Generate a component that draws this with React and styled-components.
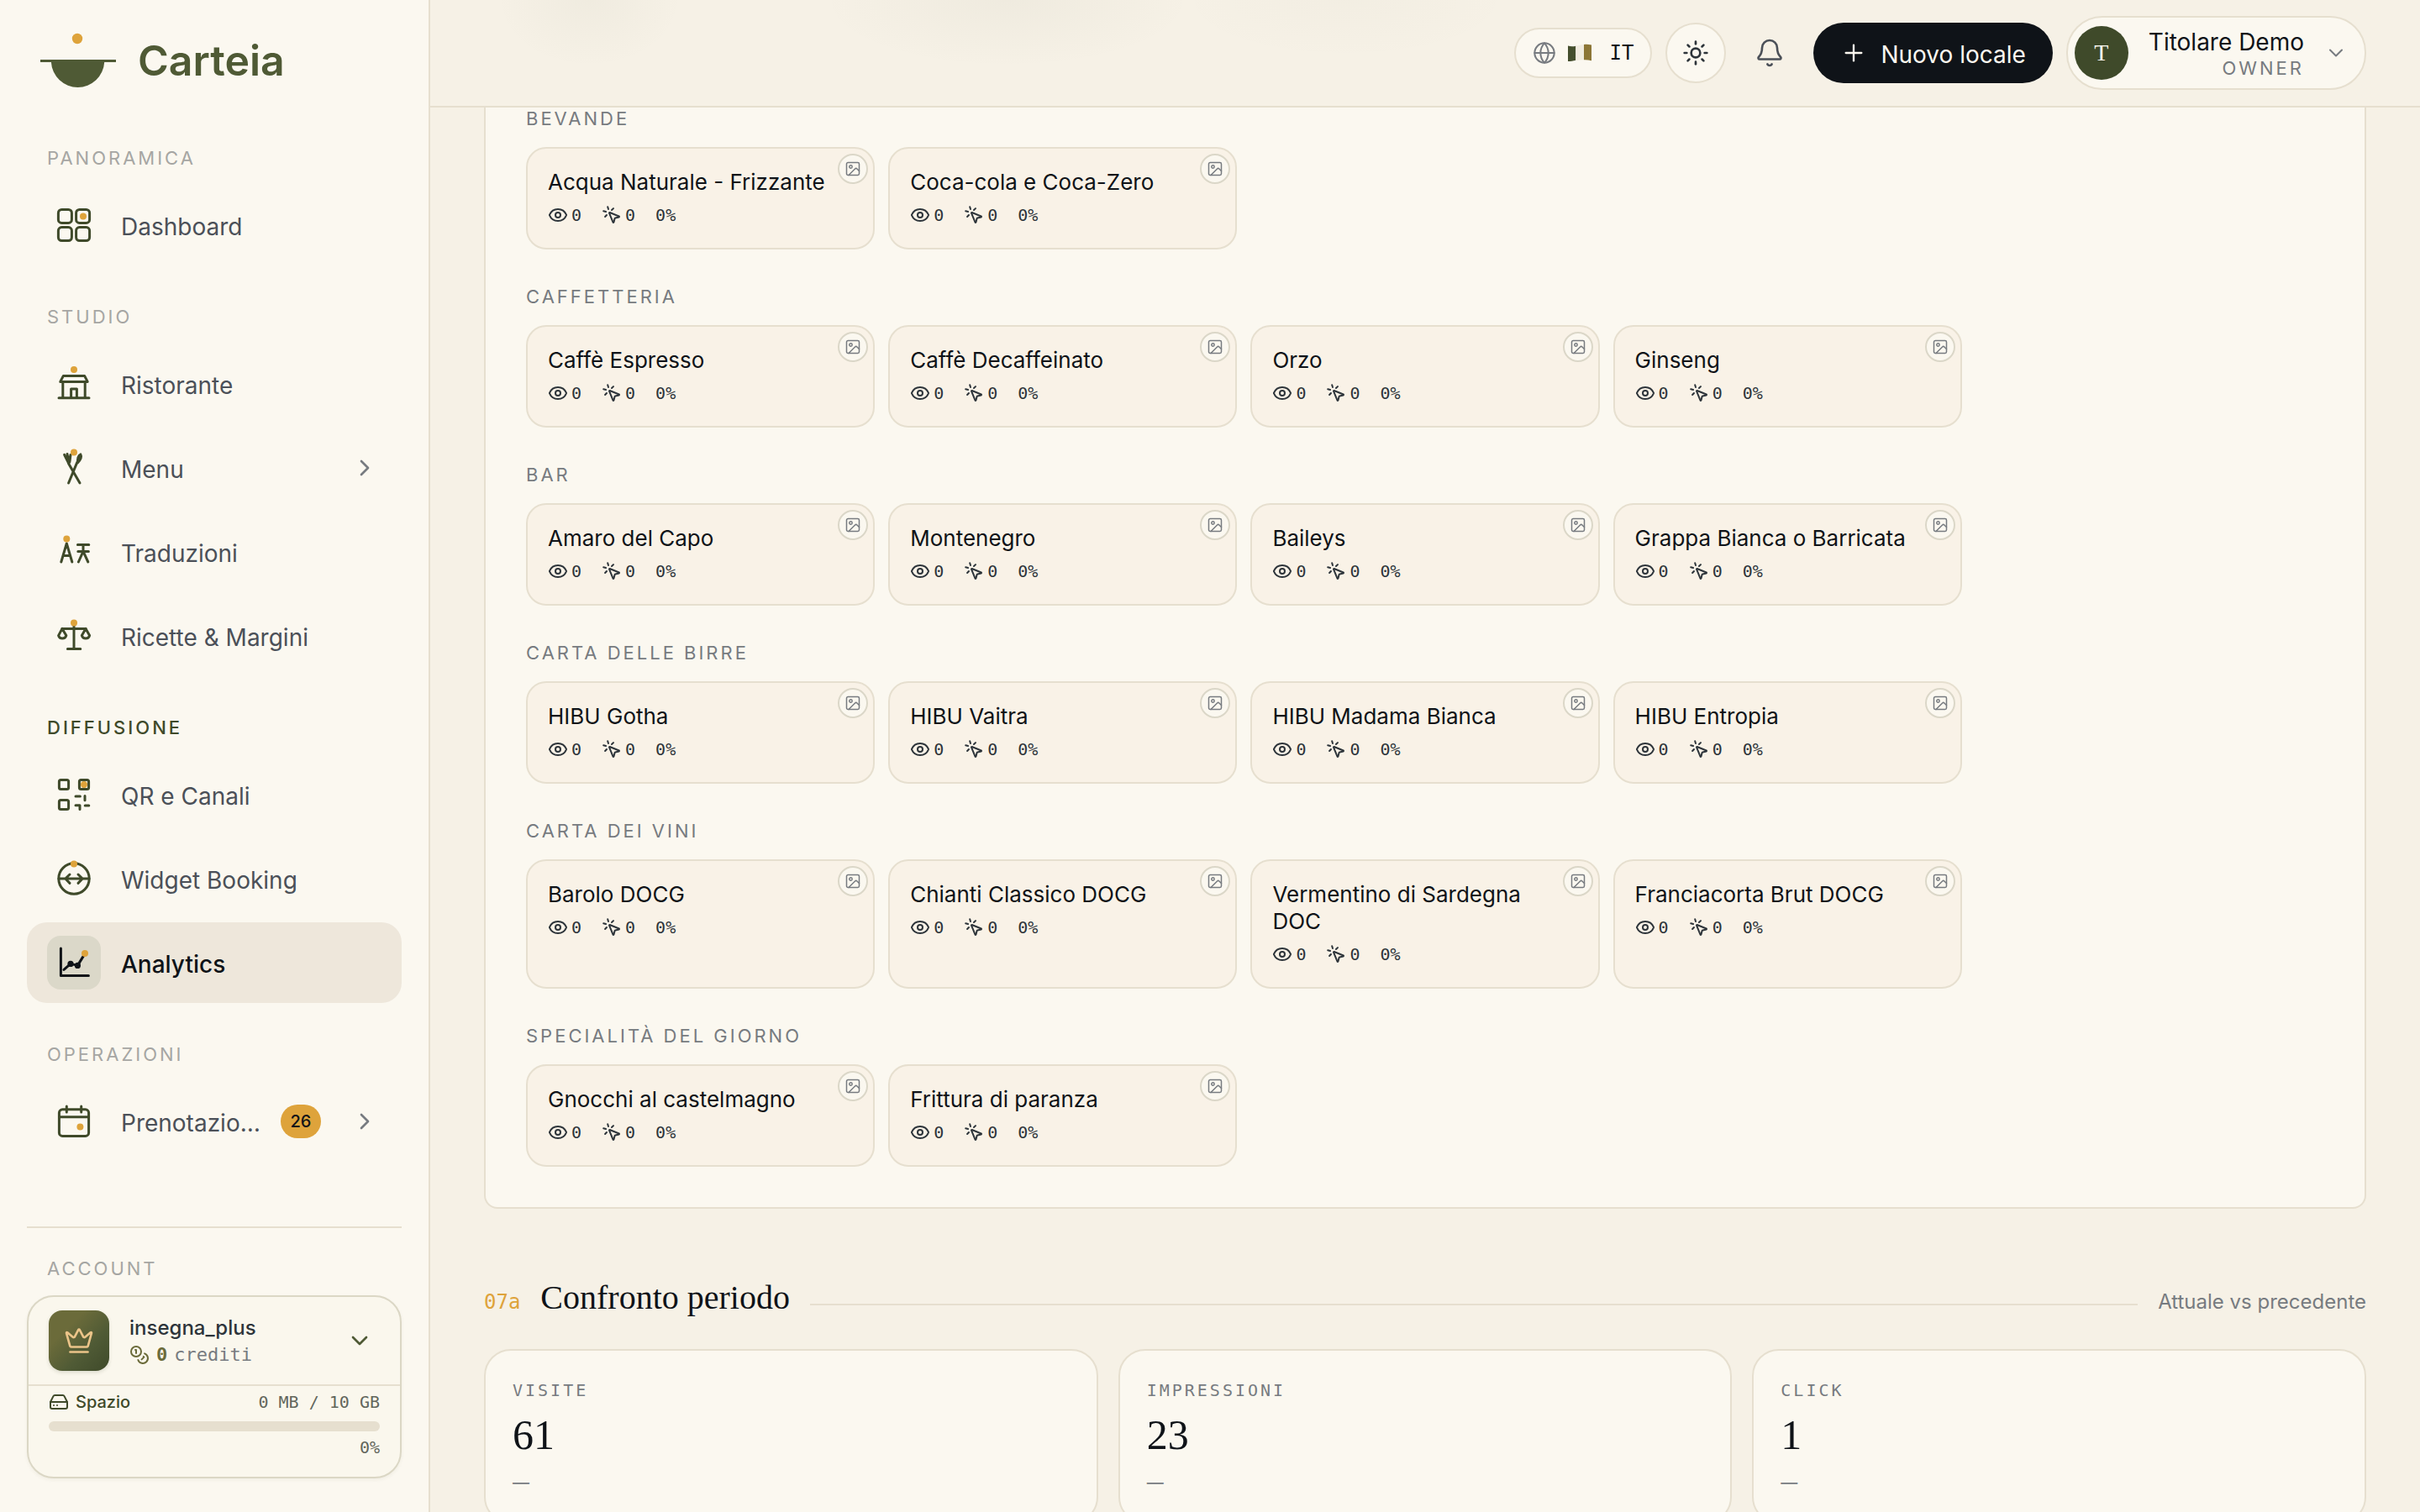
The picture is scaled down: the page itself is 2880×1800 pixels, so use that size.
import React from "react";
import styled, { createGlobalStyle, css } from "styled-components";
import {
  Bell,
  ChevronDown,
  ChevronRight,
  Coins,
  Crown,
  Eye,
  Globe,
  HardDrive,
  Image as ImageIcon,
  MousePointerClick,
  Plus,
  Sun,
} from "lucide-react";

const c = {
  paper: "#fbf8f0",
  canvas: "#f6f1e6",
  tile: "#f9f2e7",
  line: "#e6dfcf",
  ink: "#0f1318",
  text: "#4b5058",
  slate: "#2d343a",
  muted: "#777b80",
  faint: "#a6a6a3",
  moss: "#3f4a2a",
  olive: "#4f5a35",
  amber: "#dea33b",
};
const sans = `Inter, "Liberation Sans", sans-serif`;
const serif = `"Liberation Serif", serif`;
const mono = `"DejaVu Sans Mono", "Liberation Mono", monospace`;

const GlobalStyle = createGlobalStyle`
  *, *::before, *::after { box-sizing: border-box; }
  body { margin: 0; background: ${c.canvas}; color: ${c.ink}; font-family: ${sans}; }
  h1, h2, h3, p { margin: 0; font-weight: 400; }
  button { font: inherit; color: inherit; cursor: pointer; }
  a { color: inherit; text-decoration: none; }
  svg { display: block; flex: none; }
`;

const Shell = styled.div`
  display: grid;
  grid-template-columns: 512px minmax(0, 1fr);
  height: 100vh;
  overflow: hidden;
`;

/* Sidebar */
const Sidebar = styled.aside`
  display: flex;
  flex-direction: column;
  min-height: 0;
  padding: 0 32px 40px;
  background: ${c.paper};
  border-right: 2px solid ${c.line};
`;
const BrandBar = styled.div`
  flex: none;
  height: 172px;
  padding: 8px 0 0 16px;
`;
const Brand = styled.a`
  display: flex;
  align-items: center;
  gap: 24px;
  height: 128px;
  color: ${c.olive};
  font-size: 50px;
  font-weight: 600;
  line-height: 60px;
`;
const Nav = styled.nav`
  display: flex;
  flex: 1;
  flex-direction: column;
  gap: 45px;
  min-height: 0;
  overflow: hidden;
`;
const Eyebrow = styled.h2`
  padding-left: ${(p) => p.$inset || 0}px;
  color: ${(p) => p.$color || c.muted};
  font-size: 22px;
  font-weight: ${(p) => (p.$strong ? 500 : 400)};
  line-height: ${(p) => p.$line || 26}px;
  letter-spacing: 3px;
  text-transform: uppercase;
`;
const NavList = styled.div`
  display: flex;
  flex-direction: column;
  gap: 4px;
  margin-top: 16px;
`;
const NavLink = styled.a`
  display: flex;
  align-items: center;
  height: 96px;
  padding: 0 28px 0 24px;
  gap: 24px;
  border-radius: 24px;
  color: ${c.text};
  font-size: 28px;
  line-height: 36px;
  ${(p) => p.$active && css`
    background: #eee7db;
    color: ${c.ink};
    font-weight: 500;
  `}
`;
const NavIcon = styled.span`
  display: grid;
  place-items: center;
  flex: none;
  width: 64px;
  height: 64px;
  border-radius: 16px;
  color: ${(p) => (p.$active ? c.ink : c.moss)};
  background: ${(p) => (p.$active ? "#dbd8c9" : "transparent")};
`;
const NavText = styled.span`
  flex: 1;
  min-width: 0;
  padding-top: 4px;
  overflow: hidden;
  text-overflow: ellipsis;
  white-space: nowrap;
`;
const Count = styled.span`
  display: grid;
  place-items: center;
  width: 48px;
  height: 40px;
  margin-right: 12px;
  border-radius: 20px;
  background: ${c.amber};
  color: ${c.ink};
  font-size: 20px;
  font-weight: 500;
  line-height: 24px;
`;
const Account = styled.section`
  flex: none;
  padding-top: 32px;
  border-top: 2px solid ${c.line};
`;
const PlanCard = styled.div`
  margin-top: 16px;
  border: 2px solid #dbd7c5;
  border-radius: 32px;
  background: #faf7ed;
  box-shadow: 0 2px 4px rgba(63, 74, 42, 0.06);
`;
const PlanButton = styled.button`
  display: flex;
  align-items: center;
  gap: 24px;
  width: 100%;
  padding: 16px 32px 16px 24px;
  border: 0;
  border-bottom: 2px solid ${c.line};
  background: none;
  text-align: left;
  color: ${c.olive};
`;
const CrownTile = styled.span`
  display: grid;
  place-items: center;
  width: 72px;
  height: 72px;
  border-radius: 16px;
  background: linear-gradient(135deg, #6b6b3a 0%, #6b6b3a 30%, #4f5a35 65%, #3f4a2a 100%);
  box-shadow: 0 2px 4px rgba(63, 74, 42, 0.16);
  color: #ebc489;
`;
const PlanText = styled.span`
  display: grid;
  flex: 1;
`;
const PlanName = styled.span`
  color: ${c.slate};
  font-size: 24px;
  font-weight: 500;
  line-height: 34px;
`;
const Credits = styled.span`
  display: flex;
  align-items: center;
  gap: 8px;
  color: #6b6b3a;
  font-family: ${mono};
  font-size: 22px;
  line-height: 30px;
`;
const CreditsLabel = styled.span`
  color: ${c.muted};
`;
const Storage = styled.div`
  display: grid;
  padding: 4px 24px 20px;
`;
const StorageRow = styled.div`
  display: flex;
  align-items: center;
  justify-content: space-between;
  line-height: 30px;
`;
const StorageLabel = styled.span`
  display: flex;
  align-items: center;
  gap: 8px;
  color: ${c.moss};
  font-size: 20px;
  font-weight: 500;
`;
const StorageValue = styled.span`
  margin-left: auto;
  color: #62665c;
  font-family: ${mono};
  font-size: 20px;
`;
const Track = styled.div`
  height: 12px;
  margin: 8px 0 4px;
  border-radius: 6px;
  background: ${c.line};
`;

/* Top bar */
const Main = styled.main`
  display: flex;
  flex-direction: column;
  min-width: 0;
  min-height: 0;
  overflow: hidden;
`;
const TopBar = styled.header`
  display: flex;
  flex: none;
  align-items: center;
  justify-content: flex-end;
  gap: 16px;
  height: 128px;
  padding: 0 64px;
  border-bottom: 2px solid ${c.line};
  background:
    radial-gradient(110px 80px at 8% 0, rgba(70, 80, 50, 0.035), transparent),
    radial-gradient(220px 80px at 29% 0, rgba(70, 80, 50, 0.04), transparent),
    radial-gradient(200px 70px at 46% 0, rgba(70, 80, 50, 0.02), transparent),
    ${c.canvas};
`;
const LangButton = styled.button`
  display: flex;
  align-items: center;
  gap: 12px;
  height: 60px;
  padding: 0 20px;
  border: 2px solid ${c.line};
  border-radius: 30px;
  background: ${c.paper};
  color: ${c.muted};
`;
const LangCode = styled.span`
  padding-left: 8px;
  color: ${c.ink};
  font-family: ${mono};
  font-size: 24px;
  line-height: 30px;
`;
const RoundButton = styled.button`
  display: grid;
  place-items: center;
  width: 72px;
  height: 72px;
  padding: 0;
  border: 2px solid ${(p) => (p.$plain ? "transparent" : c.line)};
  border-radius: 50%;
  background: ${(p) => (p.$plain ? "none" : c.paper)};
  color: ${(p) => (p.$plain ? c.text : c.slate)};
`;
const PrimaryButton = styled.button`
  display: flex;
  align-items: center;
  gap: 16px;
  height: 72px;
  padding: 0 32px;
  border: 0;
  border-radius: 36px;
  background: ${c.ink};
  color: ${c.paper};
  font-size: 28px;
  line-height: 36px;
`;
const PrimaryText = styled.span`
  padding-top: 4px;
`;
const ProfileButton = styled.button`
  display: flex;
  align-items: center;
  gap: 24px;
  padding: 9px 20px 9px 8px;
  border: 2px solid ${c.line};
  border-radius: 43px;
  background: ${c.paper};
  color: ${c.muted};
`;
const Avatar = styled.span`
  display: grid;
  place-items: center;
  width: 64px;
  height: 64px;
  border-radius: 50%;
  background: ${c.moss};
  color: ${c.paper};
  font-family: ${serif};
  font-size: 28px;
`;
const Who = styled.span`
  display: grid;
  padding-top: 4px;
  text-align: right;
`;
const WhoName = styled.span`
  color: ${c.ink};
  font-size: 28px;
  line-height: 32px;
`;
const WhoRole = styled.span`
  font-size: 22px;
  line-height: 30px;
  letter-spacing: 3px;
`;

/* Content */
const Content = styled.div`
  flex: 1;
  min-height: 0;
  padding: 0 64px;
  overflow: hidden;
`;
const Panel = styled.section`
  display: flex;
  flex-direction: column;
  gap: 43px;
  padding: 0 48px 48px;
  border: 2px solid ${c.line};
  border-top: 0;
  border-radius: 0 0 16px 16px;
  background: ${c.paper};
`;
const DishGrid = styled.div`
  display: grid;
  grid-template-columns: repeat(5, minmax(0, 1fr));
  gap: 16px;
  margin-top: 21px;
`;
const DishCard = styled.article`
  position: relative;
  padding: 24px;
  border: 2px solid ${c.line};
  border-radius: 24px;
  background: ${c.tile};
`;
const DishName = styled.h3`
  padding-right: 24px;
  font-size: 26px;
  line-height: 32px;
`;
const PhotoBadge = styled.span`
  position: absolute;
  top: 6px;
  right: 6px;
  display: grid;
  place-items: center;
  width: 36px;
  height: 36px;
  border: 2px solid #dbd7c8;
  border-radius: 50%;
  background: ${c.paper};
  color: ${c.muted};
`;
const Stats = styled.p`
  display: flex;
  align-items: center;
  gap: 24px;
  margin-top: 8px;
  color: ${c.slate};
  font-family: ${mono};
  font-size: 20px;
  line-height: 30px;
`;
const Stat = styled.span`
  display: flex;
  align-items: center;
  gap: 4px;
`;
const SectionHead = styled.div`
  display: flex;
  align-items: baseline;
  gap: 24px;
  margin-top: 80px;
`;
const SectionNo = styled.span`
  color: ${c.amber};
  font-family: ${mono};
  font-size: 24px;
`;
const SectionTitle = styled.h2`
  font-family: ${serif};
  font-size: 40px;
  line-height: 52px;
`;
const SectionRule = styled.span`
  flex: 1;
  height: 6px;
  border-top: 2px solid ${c.line};
`;
const SectionNote = styled.span`
  color: ${c.muted};
  font-size: 24px;
`;
const KpiGrid = styled.div`
  display: grid;
  grid-template-columns: repeat(3, minmax(0, 1fr));
  gap: 24px;
  margin-top: 35px;
`;
const Kpi = styled.article`
  padding: 32px;
  border: 2px solid ${c.line};
  border-radius: 32px;
  background: ${c.paper};
`;
const KpiLabel = styled.h3`
  color: ${c.muted};
  font-family: ${mono};
  font-size: 20px;
  line-height: 30px;
  letter-spacing: 3px;
  text-transform: uppercase;
`;
const KpiValue = styled.p`
  margin-top: 8px;
  font-family: ${serif};
  font-size: 50px;
  line-height: 60px;
`;
const KpiDelta = styled.p`
  margin-top: 12px;
  color: ${c.muted};
  font-size: 20px;
  line-height: 30px;
`;

/* Drawings */
const Glyph = ({ children }) => (
  <svg width="48" height="48" viewBox="0 0 48 48" fill="none" stroke="currentColor" strokeWidth="3" strokeLinecap="round" strokeLinejoin="round" aria-hidden="true">
    {children}
  </svg>
);
const Dot = (p) => <circle r="4" fill={c.amber} stroke="none" {...p} />;

const icons = {
  dashboard: (
    <Glyph>
      <rect x="5.4" y="5.4" width="16" height="16" rx="4" />
      <rect x="26.6" y="5.4" width="16" height="16" rx="4" />
      <rect x="5.4" y="26.6" width="16" height="16" rx="4" />
      <rect x="26.6" y="26.6" width="16" height="16" rx="4" />
      <Dot cx="35" cy="13.4" />
    </Glyph>
  ),
  restaurant: (
    <Glyph>
      <path d="M11.4 14.4h25.2l3.6 7H7.8zM10.8 21.4v19.2M37.2 21.4v19.2M6 40.8h36M20.6 40.6V30h6.8v10.6" />
      <Dot cx="24" cy="7" />
    </Glyph>
  ),
  menu: (
    <Glyph>
      <path d="M12.6 8.4l4.6 9.2M16 7.6l1.6 9.6M20 8.4l-1.2 9M17.4 18.4L31 42M27.8 17.4L17.6 42" />
      <path d="M12.4 10l5 8.4 2.6-.6.4-8.2z" fill="currentColor" stroke="none" />
      <path d="M32 7.6c1.4 2.4.4 6.6-3.4 10.6-1.2-4.6.2-9.2 3.4-10.6z" fill="currentColor" strokeWidth="2.4" />
      <Dot cx="24" cy="5.4" />
    </Glyph>
  ),
  translate: (
    <Glyph>
      <path d="M8.8 36l6.5-22 6.5 22M11.2 28.4h8.2M28.4 15.4h13.4M28.8 23.4h12.6M35 15.4v8M35 23.4L29.4 36M35 23.4L40.8 36" />
      <Dot cx="15.3" cy="8.4" />
    </Glyph>
  ),
  scales: (
    <Glyph>
      <path d="M9.6 15.4h28.8M24 10v29.4M16.4 39.4h15.4M10 15.4l-4.4 8.2a4.8 4.8 0 0 0 9.2 0zM38 15.4l-4.6 8.2a4.8 4.8 0 0 0 9.2 0z" />
      <Dot cx="24" cy="8.6" />
    </Glyph>
  ),
  qr: (
    <Glyph>
      <rect x="6.4" y="6.4" width="11.2" height="11.2" rx="2" />
      <rect x="30.4" y="6.4" width="11.2" height="11.2" rx="2" />
      <rect x="6.4" y="30.4" width="11.2" height="11.2" rx="2" />
      <path d="M26 26h5.4M37 25.4v5.4M26 36.8h5v4.8M37.2 37h4.6" />
      <Dot cx="36" cy="12" />
    </Glyph>
  ),
  widget: (
    <Glyph>
      <circle cx="24" cy="24" r="18.2" />
      <path d="M6 24h36M19 19l-5.2 5 5.2 5.4M29 19l5.2 5-5.2 5.4" />
      <Dot cx="24" cy="6.6" />
    </Glyph>
  ),
  analytics: (
    <Glyph>
      <path d="M8.4 7v32.6h33M12 32.4l8-7 8.4 2 8.6-14" />
      <circle cx="20" cy="25.4" r="3.6" fill="currentColor" stroke="none" />
      <circle cx="28.4" cy="27.4" r="3.6" fill="currentColor" stroke="none" />
      <Dot cx="37" cy="13" />
    </Glyph>
  ),
  calendar: (
    <Glyph>
      <rect x="6.4" y="9.8" width="35.2" height="31.6" rx="4" />
      <path d="M6.4 18.8h35.2M15.3 6v7M32.7 6v7" />
      <Dot cx="31.4" cy="30.4" />
    </Glyph>
  ),
};

const Logo = () => (
  <svg width="92" height="68" viewBox="0 0 92 68" aria-hidden="true">
    <circle cx="44" cy="8" r="6.2" fill={c.amber} />
    <path d="M0 33h90v3H76.200A31.700 31.700 0 0 1 12.900 36H0z" fill={c.olive} />
  </svg>
);

const Flag = () => (
  <svg width="32" height="24" viewBox="0 0 32 24" aria-hidden="true">
    <path d="M2 3.500c3 .9 6 1 9.300.2v17C8 21.600 5 21.800 2 22z" fill="#454f2e" />
    <path d="M11.300 3.700C15 3 18 2.200 21 2v18.300c-3.200 0-6.400.4-9.700 1z" fill="#f1ece0" />
    <path d="M21 2c3-.4 6-.2 9 .6v18.600c-3-.8-6-1-9-.9z" fill="#8c7636" />
  </svg>
);

/* Data */
const nav = [
  { title: "Panoramica", items: [{ icon: "dashboard", label: "Dashboard" }] },
  {
    title: "Studio",
    items: [
      { icon: "restaurant", label: "Ristorante" },
      { icon: "menu", label: "Menu", more: true },
      { icon: "translate", label: "Traduzioni" },
      { icon: "scales", label: "Ricette & Margini" },
    ],
  },
  {
    title: "Diffusione",
    current: true,
    items: [
      { icon: "qr", label: "QR e Canali" },
      { icon: "widget", label: "Widget Booking" },
      { icon: "analytics", label: "Analytics", active: true },
    ],
  },
  { title: "Operazioni", items: [{ icon: "calendar", label: "Prenotazio…", count: 26, more: true }] },
];

const menu = [
  ["Bevande", ["Acqua Naturale - Frizzante", "Coca-cola e Coca-Zero"]],
  ["Caffetteria", ["Caffè Espresso", "Caffè Decaffeinato", "Orzo", "Ginseng"]],
  ["Bar", ["Amaro del Capo", "Montenegro", "Baileys", "Grappa Bianca o Barricata"]],
  ["Carta delle birre", ["HIBU Gotha", "HIBU Vaitra", "HIBU Madama Bianca", "HIBU Entropia"]],
  ["Carta dei vini", ["Barolo DOCG", "Chianti Classico DOCG", "Vermentino di Sardegna DOC", "Franciacorta Brut DOCG"]],
  ["Specialità del giorno", ["Gnocchi al castelmagno", "Frittura di paranza"]],
];

const kpis = [
  ["Visite", 61],
  ["Impressioni", 23],
  ["Click", 1],
];

const Dish = ({ name }) => (
  <DishCard>
    <DishName>{name}</DishName>
    <PhotoBadge>
      <ImageIcon size={20} strokeWidth={1.8} />
    </PhotoBadge>
    <Stats>
      <Stat><Eye size={24} />0</Stat>
      <Stat><MousePointerClick size={24} />0</Stat>
      <Stat>0%</Stat>
    </Stats>
  </DishCard>
);

export default function App() {
  return (
    <>
      <GlobalStyle />
      <Shell>
        <Sidebar>
          <BrandBar>
            <Brand href="#"><Logo />Carteia</Brand>
          </BrandBar>
          <Nav>
            {nav.map((group) => (
              <div key={group.title}>
                <Eyebrow $inset={24} $line={32} $strong={group.current} $color={group.current ? c.moss : c.faint}>
                  {group.title}
                </Eyebrow>
                <NavList>
                  {group.items.map((item) => (
                    <NavLink key={item.label} href="#" $active={item.active}>
                      <NavIcon $active={item.active}>{icons[item.icon]}</NavIcon>
                      <NavText>{item.label}</NavText>
                      {item.count && <Count>{item.count}</Count>}
                      {item.more && <ChevronRight size={32} color={c.muted} />}
                    </NavLink>
                  ))}
                </NavList>
              </div>
            ))}
          </Nav>
          <Account>
            <Eyebrow $inset={24} $line={32} $color={c.faint}>Account</Eyebrow>
            <PlanCard>
              <PlanButton type="button">
                <CrownTile><Crown size={36} strokeWidth={1.75} /></CrownTile>
                <PlanText>
                  <PlanName>insegna_plus</PlanName>
                  <Credits>
                    <Coins size={24} />
                    <b>0</b>
                    <CreditsLabel>crediti</CreditsLabel>
                  </Credits>
                </PlanText>
                <ChevronDown size={32} />
              </PlanButton>
              <Storage>
                <StorageRow>
                  <StorageLabel><HardDrive size={24} />Spazio</StorageLabel>
                  <StorageValue>0 MB / 10 GB</StorageValue>
                </StorageRow>
                <Track />
                <StorageRow><StorageValue>0%</StorageValue></StorageRow>
              </Storage>
            </PlanCard>
          </Account>
        </Sidebar>

        <Main>
          <TopBar>
            <LangButton type="button">
              <Globe size={28} strokeWidth={1.75} />
              <Flag />
              <LangCode>IT</LangCode>
            </LangButton>
            <RoundButton type="button" aria-label="Tema"><Sun size={32} /></RoundButton>
            <RoundButton type="button" aria-label="Notifiche" $plain><Bell size={36} strokeWidth={1.75} /></RoundButton>
            <PrimaryButton type="button">
              <Plus size={32} strokeWidth={1.75} />
              <PrimaryText>Nuovo locale</PrimaryText>
            </PrimaryButton>
            <ProfileButton type="button">
              <Avatar>T</Avatar>
              <Who>
                <WhoName>Titolare Demo</WhoName>
                <WhoRole>OWNER</WhoRole>
              </Who>
              <ChevronDown size={28} strokeWidth={1.75} />
            </ProfileButton>
          </TopBar>
          <Content>
            <Panel>
              {menu.map(([title, dishes]) => (
                <section key={title}>
                  <Eyebrow>{title}</Eyebrow>
                  <DishGrid>
                    {dishes.map((name) => <Dish key={name} name={name} />)}
                  </DishGrid>
                </section>
              ))}
            </Panel>
            <SectionHead>
              <SectionNo>07a</SectionNo>
              <SectionTitle>Confronto periodo</SectionTitle>
              <SectionRule />
              <SectionNote>Attuale vs precedente</SectionNote>
            </SectionHead>
            <KpiGrid>
              {kpis.map(([label, value]) => (
                <Kpi key={label}>
                  <KpiLabel>{label}</KpiLabel>
                  <KpiValue>{value}</KpiValue>
                  <KpiDelta>—</KpiDelta>
                </Kpi>
              ))}
            </KpiGrid>
          </Content>
        </Main>
      </Shell>
    </>
  );
}
